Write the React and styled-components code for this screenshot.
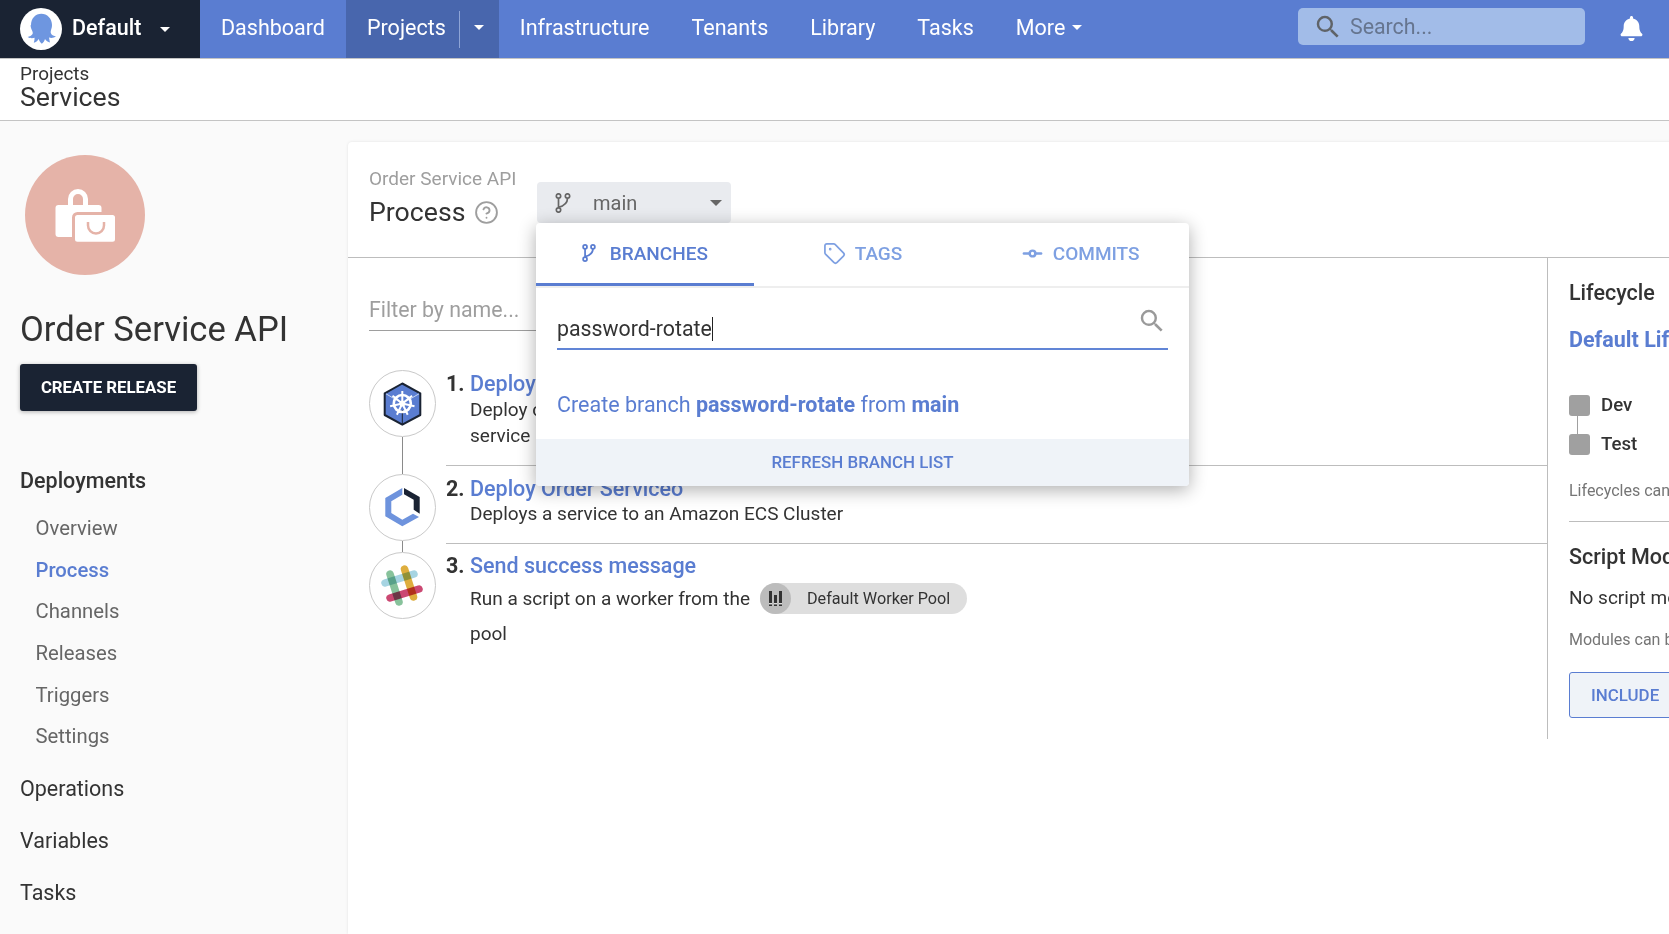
import React from "react";
import styled, { createGlobalStyle } from "styled-components";
import { CircleHelp, GitCommitHorizontal, Tag } from "lucide-react";
import { FaBell } from "react-icons/fa";
import { MdSearch } from "react-icons/md";

const Global = createGlobalStyle`
  html, body { margin: 0; padding: 0; background: #fafafa; }
  body { font-family: Roboto, "Liberation Sans", sans-serif; color: #333; }
  * { box-sizing: border-box; }
`;

const Page = styled.div`
  width: 100vw;
  height: 100vh;
  overflow: hidden;
  display: flex;
  flex-direction: column;
`;

const Header = styled.header`
  flex: none;
  height: 59px;
  display: flex;
  background: #5a7dd1;
  border-bottom: 1px solid #c4c4c4;
`;
const Org = styled.div`
  width: 200px;
  display: flex;
  align-items: center;
  padding-left: 20px;
  background: #1a2333;
  color: #fff;
  font-size: 21.5px;
  font-weight: 500;
`;
const OrgName = styled.span`
  margin-left: 10px;
  margin-right: 19px;
  padding-bottom: 4px;
`;
const Caret = styled.span`
  display: inline-block;
  width: 0;
  height: 0;
  border-left: ${(p) => p.$size || 5}px solid transparent;
  border-right: ${(p) => p.$size || 5}px solid transparent;
  border-top: ${(p) => p.$size || 5}px solid ${(p) => p.$color || "#fff"};
`;
const NavItem = styled.div`
  display: flex;
  align-items: center;
  padding: 0 ${(p) => p.$right || 21}px 4px 21px;
  gap: ${(p) => p.$gap || 0}px;
  color: #fff;
  font-size: 21.5px;
  background: ${(p) => (p.$active ? "#4866ad" : "transparent")};
`;
const NavSep = styled.span`
  width: 1px;
  height: 37px;
  margin: 4px 14px 0 13px;
  background: #8ea4d6;
`;
const SearchBox = styled.div`
  margin-left: auto;
  margin-top: 8px;
  width: 287px;
  height: 37px;
  display: flex;
  align-items: center;
  padding-left: 15px;
  gap: 7px;
  border-radius: 5px;
  background: #a2bce8;
  color: #66758f;
  font-size: 21.33px;
`;
const BellSlot = styled.div`
  width: 84px;
  display: flex;
  justify-content: center;
  align-items: center;
  padding-left: 9px;
  padding-bottom: 2px;
  color: #fff;
  font-size: 25px;
`;

const Crumbs = styled.div`
  flex: none;
  height: 62px;
  padding: 4px 0 0 20px;
  background: #fff;
  border-bottom: 1px solid #c4c4c4;
`;
const CrumbTop = styled.div`
  font-size: 18.9px;
  line-height: 21px;
`;
const CrumbTitle = styled.div`
  font-size: 26.67px;
  line-height: 27px;
`;

const Body = styled.div`
  flex: 1;
  display: flex;
  min-height: 0;
`;
const Sidebar = styled.aside`
  flex: none;
  width: 348px;
  padding: 34px 0 0 20px;
`;
const ProjectLogo = styled.div`
  width: 120px;
  height: 120px;
  margin-left: 5px;
  border-radius: 50%;
  background: #e5b3a8;
`;
const ProjectName = styled.h1`
  margin: 33px 0 0;
  font-size: 34.6px;
  line-height: 42px;
  font-weight: 400;
`;
const CreateBtn = styled.div`
  margin-top: 14px;
  width: 177px;
  height: 47px;
  padding-bottom: 1px;
  display: flex;
  align-items: center;
  justify-content: center;
  background: #1a2333;
  color: #fff;
  border-radius: 3px;
  font-size: 16.8px;
  font-weight: 700;
  box-shadow: 0 1px 4px rgba(0, 0, 0, 0.3);
`;
const SideNav = styled.nav`
  margin-top: 43px;
`;
const TopLink = styled.div`
  height: 52px;
  display: flex;
  align-items: center;
  font-size: 21.5px;
  font-weight: ${(p) => (p.$bold ? 500 : 400)};
`;
const SubList = styled.div`
  margin: 1px 0 5px;
`;
const SubLink = styled.div`
  height: 41.7px;
  display: flex;
  align-items: center;
  padding-left: 15.5px;
  font-size: 20.3px;
  color: ${(p) => (p.$active ? "#5a7dd1" : "#666")};
  font-weight: ${(p) => (p.$active ? 500 : 400)};
`;

const Card = styled.main`
  position: relative;
  flex: none;
  width: 1400px;
  margin-top: 21px;
  background: #fff;
  border-radius: 4px 0 0 0;
  box-shadow: 0 0 3px rgba(0, 0, 0, 0.1);
  display: flex;
  flex-direction: column;
`;
const CardHead = styled.div`
  flex: none;
  height: 116px;
  display: flex;
  padding: 0 0 0 21px;
  border-bottom: 1px solid #bdbdbd;
`;
const TitleBlock = styled.div`
  width: 168px;
  padding-top: 26px;
`;
const Eyebrow = styled.div`
  font-size: 19px;
  line-height: 22px;
  color: #9e9e9e;
`;
const TitleRow = styled.div`
  display: flex;
  align-items: center;
  gap: 9px;
  margin-top: 5px;
  font-size: 26.67px;
  line-height: 34px;
  color: #333;
`;
const BranchBtn = styled.div`
  margin-top: 40px;
  width: 194px;
  height: 41px;
  display: flex;
  align-items: center;
  padding-left: 18px;
  border-radius: 4px;
  background: #e9ebef;
  color: #666;
  font-size: 20px;
`;
const BranchName = styled.span`
  margin-left: 22px;
  flex: 1;
`;
const CaretSlot = styled.span`
  display: flex;
  margin-right: 9px;
`;

const Popup = styled.div`
  position: absolute;
  left: 188px;
  top: 81px;
  width: 653px;
  height: 263px;
  z-index: 5;
  background: #fff;
  border-radius: 4px;
  overflow: hidden;
  box-shadow: 0 4px 18px rgba(0, 0, 0, 0.32);
  display: flex;
  flex-direction: column;
`;
const Tabs = styled.div`
  flex: none;
  height: 65px;
  display: flex;
  border-bottom: 2px solid #eeeeee;
`;
const TabItem = styled.div`
  flex: 1;
  display: flex;
  align-items: center;
  justify-content: center;
  gap: ${(p) => p.$gap}px;
  font-size: 19px;
  font-weight: 500;
  color: ${(p) => (p.$active ? "#5a7dd1" : "#7ea0e2")};
  border-bottom: 3px solid ${(p) => (p.$active ? "#5a7dd1" : "transparent")};
`;
const FieldWrap = styled.div`
  margin: 16px 21px 0;
  height: 46px;
  padding: 6px 1px 0 0;
  display: flex;
  align-items: center;
  justify-content: space-between;
  border-bottom: 2px solid #6185d6;
  font-size: 21.33px;
  color: #333;
`;
const Typed = styled.span`
  border-right: 1px solid #222;
  line-height: 24px;
`;
const FieldIcon = styled.span`
  display: flex;
  align-self: flex-start;
  margin-top: -4px;
  color: #9a9a9a;
  font-size: 30px;
`;
const CreateLine = styled.div`
  flex: 1;
  display: flex;
  align-items: center;
  padding: 19px 21px 0;
  font-size: 21.5px;
  color: #5a7dd1;
  white-space: pre;
  b {
    font-weight: 700;
  }
`;
const PopFoot = styled.div`
  flex: none;
  height: 47px;
  padding-bottom: 2px;
  display: flex;
  align-items: center;
  justify-content: center;
  background: #eff3f8;
  color: #5a7dd1;
  font-size: 16.9px;
  font-weight: 500;
`;

const Content = styled.div`
  flex: none;
  display: flex;
  align-items: flex-start;
`;
const Main = styled.div`
  flex: none;
  width: 1200px;
  height: 481px;
  padding: 0 0 0 21px;
  border-right: 1px solid #bdbdbd;
`;
const Filter = styled.div`
  width: 300px;
  height: 40px;
  margin-top: 33px;
  margin-bottom: 39px;
  display: flex;
  align-items: center;
  border-bottom: 1px solid #9e9e9e;
  font-size: 21.33px;
  color: #9e9e9e;
  padding-bottom: 2px;
`;
const Step = styled.div`
  display: flex;
`;
const Rail = styled.div`
  flex: none;
  width: 67px;
  display: flex;
  flex-direction: column;
  align-items: center;
`;
const IconCircle = styled.div`
  flex: none;
  width: 67px;
  height: 67px;
  border: 1px solid #c9c9c9;
  border-radius: 50%;
  background: #fff;
`;
const Connector = styled.div`
  flex: 1;
  width: 1px;
  background: #8a8a8a;
`;
const StepBody = styled.div`
  flex: 1;
  margin: 0 0 ${(p) => (p.$last ? 0 : 8)}px 10px;
  padding: ${(p) => p.$top}px 0 ${(p) => p.$bottom}px;
  display: flex;
  border-bottom: ${(p) => (p.$last ? "none" : "1px solid #bdbdbd")};
`;
const StepNum = styled.div`
  flex: none;
  width: 24px;
  font-size: 21.5px;
  line-height: 26px;
  font-weight: 700;
  color: #333;
`;
const StepTitle = styled.div`
  font-size: 21.5px;
  line-height: 26px;
  font-weight: 500;
  color: #5a7dd1;
`;
const StepDesc = styled.div`
  margin-top: ${(p) => p.$top || 0}px;
  font-size: 19px;
  line-height: 26px;
  color: #333;
`;
const PoolLine = styled.div`
  display: flex;
  align-items: center;
  height: 33px;
  font-size: 19px;
  color: #333;
  &:nth-child(2) {
    margin-top: 3px;
  }
  &:nth-child(3) {
    margin-top: 2px;
  }
`;
const Pool = styled.span`
  margin-left: 10px;
  width: 207px;
  height: 31px;
  display: flex;
  align-items: center;
  border-radius: 16px;
  background: #dedede;
  font-size: 16.2px;
  color: #333;
`;
const PoolIcon = styled.span`
  flex: none;
  width: 31px;
  height: 31px;
  display: flex;
  margin-right: 16px;
  border-radius: 50%;
  background: #bcbcbc;
`;

const Side = styled.div`
  flex: none;
  width: 280px;
  padding: 22px 0 0 21px;
  white-space: nowrap;
`;
const SideTitle = styled.div`
  margin-top: ${(p) => p.$top || 0}px;
  font-size: 21.5px;
  line-height: 26px;
  font-weight: 500;
  color: #333;
`;
const SideLink = styled.div`
  margin-top: 21px;
  font-size: 21.5px;
  line-height: 26px;
  font-weight: 700;
  color: #5a7dd1;
`;
const Phases = styled.div`
  margin-top: 42px;
  display: flex;
  flex-direction: column;
  gap: 18px;
`;
const Phase = styled.div`
  position: relative;
  display: flex;
  align-items: center;
  gap: 11px;
  font-size: 18.67px;
  font-weight: 500;
  line-height: 21px;
  color: #333;
  &:first-child::after {
    content: "";
    position: absolute;
    left: 8px;
    top: 21px;
    width: 1px;
    height: 18px;
    background: #a0a0a0;
  }
`;
const Square = styled.span`
  width: 21px;
  height: 21px;
  border-radius: 3px;
  background: #a0a0a0;
`;
const SmallNote = styled.div`
  margin-top: ${(p) => p.$top}px;
  font-size: 16px;
  line-height: 20px;
  color: #757575;
`;
const SideRule = styled.div`
  margin-top: 20px;
  height: 1px;
  background: #bdbdbd;
`;
const SideText = styled.div`
  margin-top: 16px;
  font-size: 19px;
  line-height: 24px;
  color: #333;
`;
const IncludeBtn = styled.div`
  margin-top: 22px;
  width: 160px;
  height: 46px;
  display: flex;
  align-items: center;
  padding-left: 21px;
  border: 1px solid #5a7dd1;
  border-radius: 3px;
  background: #eff3f8;
  color: #5a7dd1;
  font-size: 16.9px;
  font-weight: 500;
`;

const SlackBar = styled.line`
  mix-blend-mode: multiply;
  stroke-width: 7.5;
  stroke-linecap: round;
`;

const OctoLogo = () => (
  <svg width="42" height="42" viewBox="0 0 42 42">
    <circle cx="21" cy="21" r="21" fill="#fff" />
    <path
      d="M11 17c0-6.5 4.500-11.300 10.300-11.300S32 10.500 32 17c0 4-2 6-1 8.500.8 1.800 3 2.500 5 3-2 1.500-5 1.700-7 1 .5 2 .5 3.500 1 5-2-.5-4-1.500-5-3.500-.7 2-1.500 3.700-3.200 4.700-1.500-1-2.500-2.700-3-4.700-1.200 2-3 3.200-5 3.700.5-1.500.8-3.200.8-5-2 .8-5 .6-7-.7 2-.5 4-1.300 5-3 1-2.500-2-4.500-2-8.700z"
      fill="#6e96e0"
    />
  </svg>
);

const BagIcon = () => (
  <svg width="120" height="120" viewBox="0 0 120 120">
    <path d="M45.500 50V44a7.500 7.500 0 0 1 15 0v6" fill="none" stroke="#fff" strokeWidth="5" />
    <rect x="30.500" y="50" width="46" height="32" rx="3" fill="#fff" />
    <rect x="48.500" y="58.500" width="43" height="29.700" rx="4" fill="#fff" stroke="#e5b3a8" strokeWidth="3" />
    <path d="M63 67v3.500a8 8 0 0 0 16 0V67" fill="none" stroke="#e5b3a8" strokeWidth="2.500" />
  </svg>
);

const BranchGlyph = ({ w, h, color, sw }) => (
  <svg width={w} height={h} viewBox="0 0 16 20" fill="none" stroke={color} strokeWidth={sw}>
    <circle cx="3.500" cy="3" r="2.200" />
    <circle cx="12.500" cy="3" r="2.200" />
    <circle cx="3.500" cy="17" r="2.200" />
    <path d="M3.500 5.200v9.600M12.500 5.200c0 5-3 7.500-9 9" />
  </svg>
);

const K8sIcon = () => (
  <svg width="65" height="65" viewBox="1 1 65 65">
    <path d="M33.300 13.500 51.300 23.300V45L33.300 54.700 15.700 45V23.300Z" fill="#5a7dd1" stroke="#1a2333" strokeWidth="2" strokeLinejoin="round" />
    <path d="M33.300 40V54" stroke="#1a2333" strokeWidth="1" />
    <path d="M33.300 33.500 17 23.800M33.300 33.500 50 23.800" stroke="#c8d5f0" strokeWidth="1" />
    <circle cx="33.300" cy="33.500" r="8.500" fill="none" stroke="#fff" strokeWidth="2.600" />
    <circle cx="33.300" cy="33.500" r="3" fill="#fff" />
    {[0, 51.4, 102.8, 154.3, 205.7, 257.1, 308.6].map((a) => (
      <line key={a} x1="33.300" y1="33.500" x2="33.300" y2="21" stroke="#fff" strokeWidth="2" transform={`rotate(${a} 33.300 33.500)`} />
    ))}
  </svg>
);

const EcsIcon = () => (
  <svg width="65" height="65" viewBox="1 1 65 65">
    <path d="M33.300 14v6.700L22.300 27.300V39l11 6.700L44 39.700l6 3.300-16.700 9.300-17-10V24Z" fill="#6e93dd" />
    <path d="M35 14l15.700 9v16.700l-6-4V25.700L35 20.300Z" fill="#1a2333" />
  </svg>
);

const SlackIcon = () => (
  <svg width="65" height="65" viewBox="1 1 65 65">
    <SlackBar x1="21" y1="22" x2="30" y2="50" stroke="#87c29b" />
    <SlackBar x1="35.500" y1="17" x2="44.500" y2="45" stroke="#deae3e" />
    <SlackBar x1="16" y1="31" x2="45" y2="22" stroke="#a6d4e2" />
    <SlackBar x1="21" y1="46" x2="50" y2="37" stroke="#cb4872" />
  </svg>
);

const PoolGlyph = () => (
  <svg width="31" height="31" viewBox="0 0 31 31">
    <rect x="9" y="8" width="3" height="15" fill="#333" />
    <rect x="14" y="12" width="3" height="11" fill="#333" />
    <rect x="19" y="8" width="3" height="15" fill="#333" />
    <rect x="9" y="20" width="3" height="1.400" fill="#ddd" />
    <rect x="14" y="20" width="3" height="1.400" fill="#ddd" />
    <rect x="19" y="20" width="3" height="1.400" fill="#ddd" />
  </svg>
);

const subItems = ["Overview", "Process", "Channels", "Releases", "Triggers", "Settings"];

export default function App() {
  return (
    <Page>
      <Global />
      <Header>
        <Org>
          <OctoLogo />
          <OrgName>Default</OrgName>
          <Caret />
        </Org>
        <NavItem>Dashboard</NavItem>
        <NavItem $active $right={15}>
          Projects
          <NavSep />
          <Caret />
        </NavItem>
        <NavItem>Infrastructure</NavItem>
        <NavItem>Tenants</NavItem>
        <NavItem>Library</NavItem>
        <NavItem>Tasks</NavItem>
        <NavItem $gap={7}>
          More <Caret />
        </NavItem>
        <SearchBox>
          <MdSearch size={30} color="#5f6368" />
          Search...
        </SearchBox>
        <BellSlot>
          <FaBell />
        </BellSlot>
      </Header>
      <Crumbs>
        <CrumbTop>Projects</CrumbTop>
        <CrumbTitle>Services</CrumbTitle>
      </Crumbs>
      <Body>
        <Sidebar>
          <ProjectLogo>
            <BagIcon />
          </ProjectLogo>
          <ProjectName>Order Service API</ProjectName>
          <CreateBtn>CREATE RELEASE</CreateBtn>
          <SideNav>
            <TopLink $bold>Deployments</TopLink>
            <SubList>
              {subItems.map((s) => (
                <SubLink key={s} $active={s === "Process"}>
                  {s}
                </SubLink>
              ))}
            </SubList>
            <TopLink>Operations</TopLink>
            <TopLink>Variables</TopLink>
            <TopLink>Tasks</TopLink>
          </SideNav>
        </Sidebar>
        <Card>
          <CardHead>
            <TitleBlock>
              <Eyebrow>Order Service API</Eyebrow>
              <TitleRow>
                Process
                <CircleHelp size={25} color="#9e9e9e" strokeWidth={1.8} />
              </TitleRow>
            </TitleBlock>
            <BranchBtn>
              <BranchGlyph w={16} h={20} color="#666" sw={1.7} />
              <BranchName>main</BranchName>
              <CaretSlot>
                <Caret $size={6} $color="#666" />
              </CaretSlot>
            </BranchBtn>
          </CardHead>
          <Popup>
            <Tabs>
              <TabItem $active $gap={14}>
                <BranchGlyph w={14} h={18} color="#5a7dd1" sw={2} />
                BRANCHES
              </TabItem>
              <TabItem $gap={9}>
                <Tag size={23} strokeWidth={1.8} />
                TAGS
              </TabItem>
              <TabItem $gap={9}>
                <GitCommitHorizontal size={23} strokeWidth={2.6} />
                COMMITS
              </TabItem>
            </Tabs>
            <FieldWrap>
              <Typed>password-rotate</Typed>
              <FieldIcon>
                <MdSearch />
              </FieldIcon>
            </FieldWrap>
            <CreateLine>
              Create branch <b>password-rotate</b> from <b>main</b>
            </CreateLine>
            <PopFoot>REFRESH BRANCH LIST</PopFoot>
          </Popup>
          <Content>
            <Main>
              <Filter>Filter by name...</Filter>
              <Step>
                <Rail>
                  <IconCircle>
                    <K8sIcon />
                  </IconCircle>
                  <Connector />
                </Rail>
                <StepBody $top={1} $bottom={16}>
                  <StepNum>1.</StepNum>
                  <div>
                    <StepTitle>Deploy Kubernetes containers</StepTitle>
                    <StepDesc>
                      Deploy containers to Kubernetes as a
                      <br />
                      service
                    </StepDesc>
                  </div>
                </StepBody>
              </Step>
              <Step>
                <Rail>
                  <IconCircle>
                    <EcsIcon />
                  </IconCircle>
                  <Connector />
                </Rail>
                <StepBody $top={2} $bottom={16}>
                  <StepNum>2.</StepNum>
                  <div>
                    <StepTitle>Deploy Order Serviceo</StepTitle>
                    <StepDesc $top={-1}>Deploys a service to an Amazon ECS Cluster</StepDesc>
                  </div>
                </StepBody>
              </Step>
              <Step>
                <Rail>
                  <IconCircle>
                    <SlackIcon />
                  </IconCircle>
                </Rail>
                <StepBody $last $top={1} $bottom={0}>
                  <StepNum>3.</StepNum>
                  <div>
                    <StepTitle>Send success message</StepTitle>
                    <PoolLine>
                      Run a script on a worker from the
                      <Pool>
                        <PoolIcon>
                          <PoolGlyph />
                        </PoolIcon>
                        Default Worker Pool
                      </Pool>
                    </PoolLine>
                    <PoolLine>pool</PoolLine>
                  </div>
                </StepBody>
              </Step>
            </Main>
            <Side>
              <SideTitle>Lifecycle</SideTitle>
              <SideLink>Default Lifecycle</SideLink>
              <Phases>
                <Phase>
                  <Square />
                  Dev
                </Phase>
                <Phase>
                  <Square />
                  Test
                </Phase>
              </Phases>
              <SmallNote $top={26}>Lifecycles can be defined in the Library</SmallNote>
              <SideRule />
              <SideTitle $top={22}>Script Modules</SideTitle>
              <SideText>No script modules</SideText>
              <SmallNote $top={20}>Modules can be defined in the Library</SmallNote>
              <IncludeBtn>INCLUDE</IncludeBtn>
            </Side>
          </Content>
        </Card>
      </Body>
    </Page>
  );
}
